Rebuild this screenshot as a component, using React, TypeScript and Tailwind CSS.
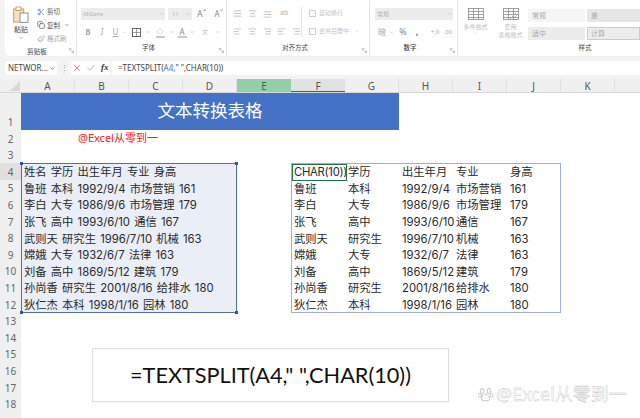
import {
  AlignCenter,
  AlignJustify,
  AlignLeft,
  AlignRight,
  ChevronDown,
  Check,
  Copy,
  Paintbrush,
  Scissors,
  X,
} from "lucide-react";

const cols = ["A", "B", "C", "D", "E", "F", "G", "H", "I", "J", "K"];

const rows = [
  ["姓名", "学历", "出生年月", "专业", "身高"],
  ["鲁班", "本科", "1992/9/4", "市场营销", "161"],
  ["李白", "大专", "1986/9/6", "市场管理", "179"],
  ["张飞", "高中", "1993/6/10", "通信", "167"],
  ["武则天", "研究生", "1996/7/10", "机械", "163"],
  ["嫦娥", "大专", "1932/6/7", "法律", "163"],
  ["刘备", "高中", "1869/5/12", "建筑", "179"],
  ["孙尚香", "研究生", "2001/8/16", "给排水", "180"],
  ["狄仁杰", "本科", "1998/1/16", "园林", "180"],
];

const rowNums = Array.from({ length: 18 }, (_, i) => i + 1);

function GridIcon({ accent }: { accent?: boolean }) {
  return (
    <svg width="16" height="12" viewBox="0 0 16 12" fill="none" stroke="#8a8a8a" strokeWidth="0.8">
      <rect x="0.5" y="0.5" width="15" height="11" />
      <path d="M0.5 3.5h15M0.5 6.5h15M0.5 9.5h15M5.5 0.5v11M10.5 0.5v11" />
      {accent && <path d="M7 11l6-6M9 12l5-5" stroke="#a0a0a0" />}
    </svg>
  );
}

function Launcher() {
  return (
    <svg width="5" height="5" viewBox="0 0 5 5" fill="none" stroke="#aaa" strokeWidth="0.7" className="absolute right-[2px] bottom-[3px]">
      <path d="M0.5 2.5v-2h2M1.5 1.5l3 3M4.5 2.5v2h-2" />
    </svg>
  );
}

function GroupLabel({ children, className }: { children: string; className?: string }) {
  return <div className={"mt-auto h-[14px] text-[6.5px] text-center text-[#444] leading-[11px] " + (className ?? "")}>{children}</div>;
}

function Ribbon() {
  return (
    <div className="h-[60px] bg-[#f3f3f3] pl-[5px] flex flex-col">
      <div className="h-[56px] bg-white rounded-bl-md flex text-[#777]">
        {/* 剪贴板 */}
        <div className="relative w-[72px] shrink-0 border-r border-[#e6e6e6] flex flex-col">
          <div className="flex pt-[5px]">
            <div className="w-[32px] flex flex-col items-center">
              <svg width="16" height="17" viewBox="0 0 16 17" fill="none" className="mt-[1px]">
                <rect x="0.7" y="3" width="10" height="13" fill="#f6e3bf" stroke="#d39b3f" />
                <rect x="3" y="1" width="5" height="3.5" fill="#fff" stroke="#b98a3b" strokeWidth="0.8" />
                <rect x="7" y="7" width="8" height="9.3" fill="#fff" stroke="#777" strokeWidth="0.8" />
              </svg>
              <span className="text-[7px] leading-[9px] mt-[2px] text-[#444]">粘贴</span>
              <ChevronDown size={6} className="mt-[1px]" />
            </div>
            <div className="flex flex-col text-[6.5px] leading-[13.5px] text-[#555]">
              <div className="flex items-center gap-[2px]">
                <Scissors size={8} className="text-[#5a7fb5]" />
                剪切
              </div>
              <div className="flex items-center gap-[2px]">
                <Copy size={8} />
                复制
                <ChevronDown size={6} className="ml-[2px]" />
              </div>
              <div className="flex items-center gap-[2px] text-[#aaa]">
                <Paintbrush size={8} />
                格式刷
              </div>
            </div>
          </div>
          <GroupLabel className="pr-[7px]">剪贴板</GroupLabel>
          <Launcher />
        </div>

        {/* 字体 */}
        <div className="relative w-[150px] shrink-0 border-r border-[#e6e6e6] flex flex-col pl-[4px]">
          <div className="flex items-center gap-[3px] mt-[8px] h-[12px]">
            <div className="w-[87px] h-[12px] bg-[#ececec] text-[6px] leading-[12px] pl-[2px] text-[#b5b5b5] flex justify-between items-center pr-[1px]">
              MiSans
              <ChevronDown size={6} />
            </div>
            <div className="w-[25px] h-[12px] bg-[#ececec] text-[6px] leading-[12px] pl-[4px] text-[#b5b5b5] flex justify-between items-center pr-[1px]">
              11
              <ChevronDown size={6} />
            </div>
            <span className="w-[14px] text-center text-[9px] text-[#888]">Aˆ</span>
            <span className="w-[15px] text-center text-[8px] text-[#888]">Aˇ</span>
          </div>
          <div className="flex items-center text-[8px] text-[#aaa] mt-[6px] h-[12px]">
            <b className="w-[14px] text-center">B</b>
            <i className="w-[14px] text-center">I</i>
            <u className="w-[13px] text-center">U</u>
            <ChevronDown size={5} />
            <div className="w-[18px] flex justify-center">
              <svg width="9" height="9" viewBox="0 0 9 9" fill="none" stroke="#666">
                <rect x="0.5" y="0.5" width="8" height="8" />
                <path d="M0.5 4.5h8M4.5 0.5v8" strokeWidth="0.6" />
              </svg>
            </div>
            <ChevronDown size={6} />
            <div className="w-[18px] flex justify-center">
              <div className="w-[9px] border-b-2 border-[#c8c8c8] text-center leading-[9px] text-[7px] text-[#999]">◇</div>
            </div>
            <ChevronDown size={6} />
            <div className="w-[14px] flex justify-center">
              <div className="w-[9px] border-b-2 border-[#c8c8c8] text-center leading-[9px] text-[8px] text-[#888]">A</div>
            </div>
            <ChevronDown size={6} />
            <div className="w-[20px] text-center text-[6px] text-[#bbb]">文</div>
            <ChevronDown size={6} />
          </div>
          <GroupLabel className="pr-[10px]">字体</GroupLabel>
          <Launcher />
        </div>

        {/* 对齐方式 */}
        <div className="relative w-[143px] shrink-0 border-r border-[#e6e6e6] flex flex-col pl-[6px]">
          <div className="flex mt-[7px]">
            <div className="w-[69px] border-r border-[#e6e6e6] shrink-0">
              <div className="flex items-center h-[12px] text-[#b0b0b0] gap-[6px]">
                <AlignJustify size={9} />
                <AlignCenter size={9} />
                <AlignJustify size={9} className="mt-[3px]" />
                <span className="ml-[2px] text-[7px]">ab</span>
              </div>
              <div className="flex items-center h-[12px] mt-[6px] text-[#b5b5b5] gap-[6px]">
                <AlignLeft size={9} />
                <AlignCenter size={9} />
                <AlignRight size={9} />
                <AlignLeft size={9} />
                <AlignRight size={9} />
              </div>
            </div>
            <div className="pl-[7px] text-[6px] text-[#c4c4c4]">
              <div className="h-[12px] leading-[12px] flex items-center gap-[3px]">
                <span className="size-[7px] border border-[#ccc]" />
                自动换行
              </div>
              <div className="h-[12px] leading-[12px] mt-[6px] flex items-center gap-[3px]">
                <span className="size-[7px] border border-[#ccc]" />
                合并后居中
                <ChevronDown size={6} className="ml-[2px]" />
              </div>
            </div>
          </div>
          <GroupLabel className="pr-[12px]">对齐方式</GroupLabel>
          <Launcher />
        </div>

        {/* 数字 */}
        <div className="relative w-[88px] shrink-0 border-r border-[#e6e6e6] flex flex-col pl-[5px]">
          <div className="w-[78px] h-[12px] bg-[#ececec] mt-[8px] text-[6px] pl-[2px] pr-[1px] text-[#b5b5b5] flex items-center justify-between">
            常规
            <ChevronDown size={6} />
          </div>
          <div className="flex items-center h-[12px] mt-[6px] text-[#aaa] text-[9px]">
            <span className="w-[14px] text-center text-[8px]">暗</span>
            <ChevronDown size={5} />
            <span className="w-[18px] text-center text-[#888]">%</span>
            <span className="w-[10px] text-center font-bold text-[#666]">,</span>
            <span className="w-[14px] ml-[6px] text-center text-[6px]">+.0</span>
            <span className="w-[12px] text-center text-[6px]">.00</span>
          </div>
          <GroupLabel className="pr-[12px] font-medium">数字</GroupLabel>
          <Launcher />
        </div>

        {/* 样式 */}
        <div className="flex-1 flex flex-col">
          <div className="flex">
            <div className="w-[35px] flex flex-col items-center pt-[8px]">
              <GridIcon />
              <span className="text-[6px] text-[#c0c0c0] leading-[8px] mt-[3px]">条件格式</span>
              <ChevronDown size={5} className="text-[#bbb]" />
            </div>
            <div className="w-[35px] flex flex-col items-center pt-[8px]">
              <GridIcon accent />
              <span className="text-[6px] text-[#c0c0c0] leading-[8px] mt-[3px]">套用</span>
              <span className="text-[6px] text-[#c0c0c0] leading-[8px] whitespace-nowrap">表格格式</span>
            </div>
            <div className="flex-1 mt-[9px] grid grid-cols-[57px_1fr] gap-x-[2px] gap-y-[5px] text-[7px] leading-[13px] text-[#aaa]">
              <div className="bg-[#f5f5f5] pl-[4px]">常规</div>
              <div className="bg-[#e6e6e6] pl-[4px]">差</div>
              <div className="bg-[#ececec] pl-[4px]">适中</div>
              <div className="bg-[#ececec] border border-[#ccc] pl-[3px] leading-[11px]">计算</div>
            </div>
          </div>
          <GroupLabel className="pl-[72px]">样式</GroupLabel>
        </div>
      </div>
    </div>
  );
}

function FormulaBar() {
  return (
    <div className="h-[19px] bg-[#f3f3f3] flex pl-[5px] pt-[1px] pb-[4px] text-[#444]">
      <div className="w-[52px] bg-white rounded-[2px] flex items-center justify-between pl-[3px] pr-[1px] text-[8px]">
        <span>NETWOR...</span>
        <ChevronDown size={7} />
      </div>
      <div className="w-[14px] text-center text-[7px] leading-[13px] text-[#888]">⋮</div>
      <div className="w-[39px] bg-white rounded-[2px] flex items-center gap-[4px] pl-[1px]">
        <X size={10} className="text-[#c96a6a]" />
        <Check size={10} className="text-[#8fb59c]" />
        <span className="ml-[1px] text-[9px] italic font-semibold font-['Liberation_Serif',serif] text-[#333]">fx</span>
      </div>
      <div className="flex-1 bg-white ml-[2px] rounded-l-[2px] pl-[6px] text-[8px] leading-[13px]">
        =TEXTSPLIT(<span className="text-[#3b6fc4]">A4</span>," ",CHAR(10))
      </div>
    </div>
  );
}

function Sheet() {
  return (
    <div className="flex-1 min-h-0 overflow-hidden relative bg-white">
      <div className="h-[14px] bg-[#f0f0f0] flex text-[10px] leading-[14px] text-[#555] border-b border-[#d8d8d8]">
        <div className="w-[21px] shrink-0 flex items-end justify-end pr-[1px] pb-[1px]">
          <svg width="10" height="10" viewBox="0 0 10 10">
            <path d="M10 0v10H0z" fill="#d8d8d8" />
          </svg>
        </div>
        {cols.map((c) => (
          <div
            key={c}
            className={
              c === "E"
                ? "w-[54px] shrink-0 text-center bg-[#93cfab] text-[#2f6e4c]"
                : c === "F"
                  ? "w-[54px] shrink-0 text-center bg-[#e2e2e2] border-b border-[#217346]"
                  : "w-[54px] shrink-0 text-center border-r border-[#e2e2e2]"
            }
          >
            {c}
          </div>
        ))}
      </div>
      <div className="flex">
        <div className="w-[21px] shrink-0 bg-[#f0f0f0] grid grid-rows-[37px_repeat(18,16.6px)] text-[10px] text-[#666] text-center">
          {rowNums.map((n) => (
            <div
              key={n}
              className={n === 4 ? "bg-[#e0e0e0] flex items-end justify-center" : "flex items-end justify-center"}
            >
              {n}
            </div>
          ))}
        </div>
        <div className="grid grid-cols-[repeat(11,54px)] grid-rows-[37px_repeat(18,16.6px)] font-['Inter','Noto_Sans_CJK_SC',sans-serif] text-[#2a2a2a]">
          <div className="col-start-1 col-span-7 row-start-1 bg-[#4472c4] text-white text-[17.5px] pb-[2px] flex items-center justify-center font-['Noto_Sans_CJK_SC',sans-serif]">
            文本转换表格
          </div>
          <div className="col-start-2 col-span-3 row-start-2 pl-[3px] text-[11px] leading-[16.6px] text-[#e8202a] font-['Noto_Sans','Noto_Sans_CJK_SC',sans-serif]">
            @Excel从零到一
          </div>

          {/* A4 原始文本 */}
          <div className="col-start-1 col-span-4 row-start-4 row-span-9 relative bg-[#e9eef7] border border-[#4a6fb5]">
            {rows.map((r, i) => (
              <div key={i} className="h-[16.6px] pl-[2px] text-[11.3px] leading-[16.6px] whitespace-nowrap [word-spacing:1px]">
                {r.join(" ")}
              </div>
            ))}
            <span className="absolute -top-[2px] -left-[2px] size-[3px] bg-[#2f55a4]" />
            <span className="absolute -top-[2px] -right-[2px] size-[3px] bg-[#2f55a4]" />
            <span className="absolute -bottom-[2px] -left-[2px] size-[3px] bg-[#2f55a4]" />
            <span className="absolute -bottom-[2px] -right-[2px] size-[3px] bg-[#2f55a4]" />
          </div>

          {/* TEXTSPLIT 结果 */}
          <div className="col-start-6 col-span-5 row-start-4 row-span-9 relative border border-[#9fb0d4] grid grid-cols-[repeat(5,54px)] auto-rows-[16.6px]">
            {rows.flatMap((r, i) =>
              r.map((cell, j) => (
                <div key={`${i}-${j}`} className="pl-[2px] text-[11.3px] leading-[16.6px] whitespace-nowrap">
                  {i === 0 && j === 0 ? <span className="tracking-[-0.3px]">CHAR(10))</span> : cell}
                </div>
              )),
            )}
            <span className="absolute top-0 left-0 w-[55px] h-[17px] border border-[#217346]" />
          </div>
        </div>
      </div>

      {/* 文本框 */}
      <div className="absolute left-[92px] top-[269px] w-[357px] h-[54px] bg-white border border-[#dcdcdc] flex items-center justify-center text-[21.7px] text-[#111] font-['Lato',sans-serif]">
        =TEXTSPLIT(A4," ",CHAR(10))
      </div>

      {/* 水印 */}
      <div className="absolute left-[478px] top-[302px] flex items-center gap-[2px] text-[18px] text-white/80 [-webkit-text-stroke:0.4px_#c4c4c4] font-['Noto_Sans','Noto_Sans_CJK_SC',sans-serif] whitespace-nowrap">
        <svg width="16" height="15" viewBox="0 0 16 15" fill="none" stroke="#c4c4c4" strokeWidth="1">
          <ellipse cx="4" cy="4" rx="1.8" ry="2.6" />
          <ellipse cx="11" cy="4" rx="1.8" ry="2.6" />
          <ellipse cx="1.8" cy="8.5" rx="1.4" ry="2" />
          <ellipse cx="13.6" cy="8.5" rx="1.4" ry="2" />
          <path d="M7.5 7c2.5 0 4 3 4 5s-2 2-4 1.5c-2 .5-4 .5-4-1.5s1.5-5 4-5z" />
        </svg>
        @Excel从零到一
      </div>
    </div>
  );
}

export default function App() {
  return (
    <div className="w-[640px] h-[418px] overflow-hidden flex flex-col bg-white font-['Noto_Sans','Noto_Sans_CJK_SC',sans-serif]">
      <Ribbon />
      <FormulaBar />
      <Sheet />
    </div>
  );
}
